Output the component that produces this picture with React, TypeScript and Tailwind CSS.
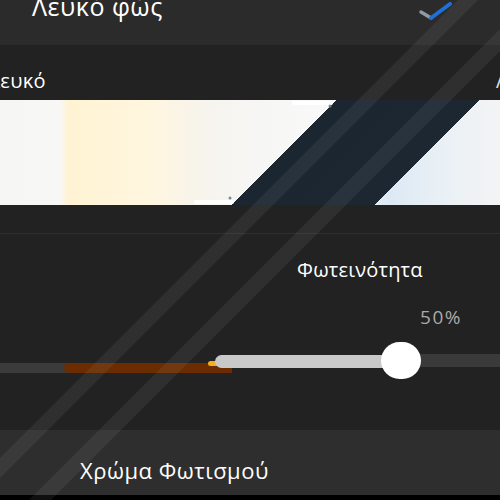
import React from "react";

function Check() {
  return (
    <svg width="40" height="22" viewBox="0 0 40 22" className="mt-[2px]">
      <path d="M5 10 L15 16" stroke="#8f9aa3" strokeWidth="3.5" strokeLinecap="round" fill="none" />
      <path d="M15 16 L34 2" stroke="#1f6fd6" strokeWidth="4" strokeLinecap="round" fill="none" />
    </svg>
  );
}

function Stripes() {
  const band = (c: number, w: number) => {
    const a = c - w / 2;
    const b = c + w / 2;
    return `${a},0 ${b},0 ${b - 500},500 ${a - 500},500`;
  };
  return (
    <svg
      className="absolute inset-0 pointer-events-none"
      width="500"
      height="500"
      viewBox="0 0 500 500"
    >
      <polygon points={band(468, 20)} fill="#ffffff" fillOpacity="0.06" />
      <polygon points={band(540, 22)} fill="#ffffff" fillOpacity="0.06" />
    </svg>
  );
}

function ColorBar() {
  return (
    <div className="relative h-[105px] shrink-0 bg-[linear-gradient(135deg,transparent_0px,transparent_238px,#1b2631_238px,#1c2732_339px,transparent_339px),linear-gradient(90deg,#f6f6f6_0px,#f7f7f5_60px,#fff3d3_68px,#fff6df_150px,#f7f4ec_200px,#f6f6f5_260px,#f9f9f9_330px,#dce9f4_390px,#e9f0f5_440px,#f3f4f4_500px)]">
      <svg className="absolute inset-0" width="500" height="105" viewBox="0 0 500 105">
        <path d="M294 3 L331 3" stroke="#ffffff" strokeWidth="4" strokeLinecap="round" />
        <path d="M196 102 L232 102" stroke="#ffffff" strokeWidth="4" strokeLinecap="round" />
        <circle cx="330" cy="6" r="1.5" fill="#7b8790" />
        <circle cx="230" cy="98" r="1.5" fill="#7b8790" />
      </svg>
    </div>
  );
}

function Slider() {
  return (
    <div className="relative h-[40px] shrink-0">
      <div className="absolute left-0 top-[22px] h-[10px] w-[70px] bg-[#3b3b3b]" />
      <div className="absolute left-[64px] top-[22px] h-[10px] w-[168px] rounded-l-full bg-[#6a2c00]" />
      <div className="absolute left-[208px] top-[20px] h-[5px] w-[26px] rounded-l-full bg-[#f3ae22]" />
      <div className="absolute left-[215px] top-[14px] h-[13px] w-[180px] rounded-l-full bg-[#c9c9c9]" />
      <div className="absolute left-[410px] top-[13px] h-[13px] w-[90px] bg-[#3a3a3a]" />
      <div className="absolute left-[381px] top-[1px] h-[37px] w-[40px] rounded-full bg-white" />
    </div>
  );
}

export default function App() {
  return (
    <div className="relative w-[500px] h-[500px] overflow-hidden bg-[#2b2b2b] flex flex-col font-['Open_Sans',sans-serif] text-white">
      <div className="h-[45px] shrink-0 flex items-start justify-between pl-[32px] pr-[44px]">
        <div className="text-[25px] leading-none -mt-[6px] tracking-[0.5px]">Λευκό φώς</div>
        <Check />
      </div>

      <div className="h-[385px] shrink-0 bg-[#222222] flex flex-col">
        <div className="h-[55px] shrink-0 flex items-start justify-between pt-[26px]">
          <div className="text-[20px] leading-none -ml-[12px] tracking-[0.3px]">Λευκό</div>
          <div className="text-[20px] leading-none -mr-[8px] text-[#dddddd]">Λ</div>
        </div>
        <ColorBar />
        <div className="mt-[28px] h-px shrink-0 bg-[#2f2f2f]" />
        <div className="pl-[297px] pt-[26px] text-[20px] leading-none tracking-[0.2px]">Φωτεινότητα</div>
        <div className="flex justify-end pr-[38px] pt-[28px] text-[19px] leading-none tracking-[1.5px] text-[#a9a9a9]">50%</div>
        <div className="mt-[14px]">
          <Slider />
        </div>
      </div>

      <div className="h-[65px] shrink-0 bg-[#2e2e2e] pl-[80px] pt-[29px]">
        <div className="text-[22px] leading-none tracking-[0.5px]">Χρώμα Φωτισμού</div>
      </div>
      <div className="h-[5px] shrink-0 bg-black" />

      <Stripes />
    </div>
  );
}
